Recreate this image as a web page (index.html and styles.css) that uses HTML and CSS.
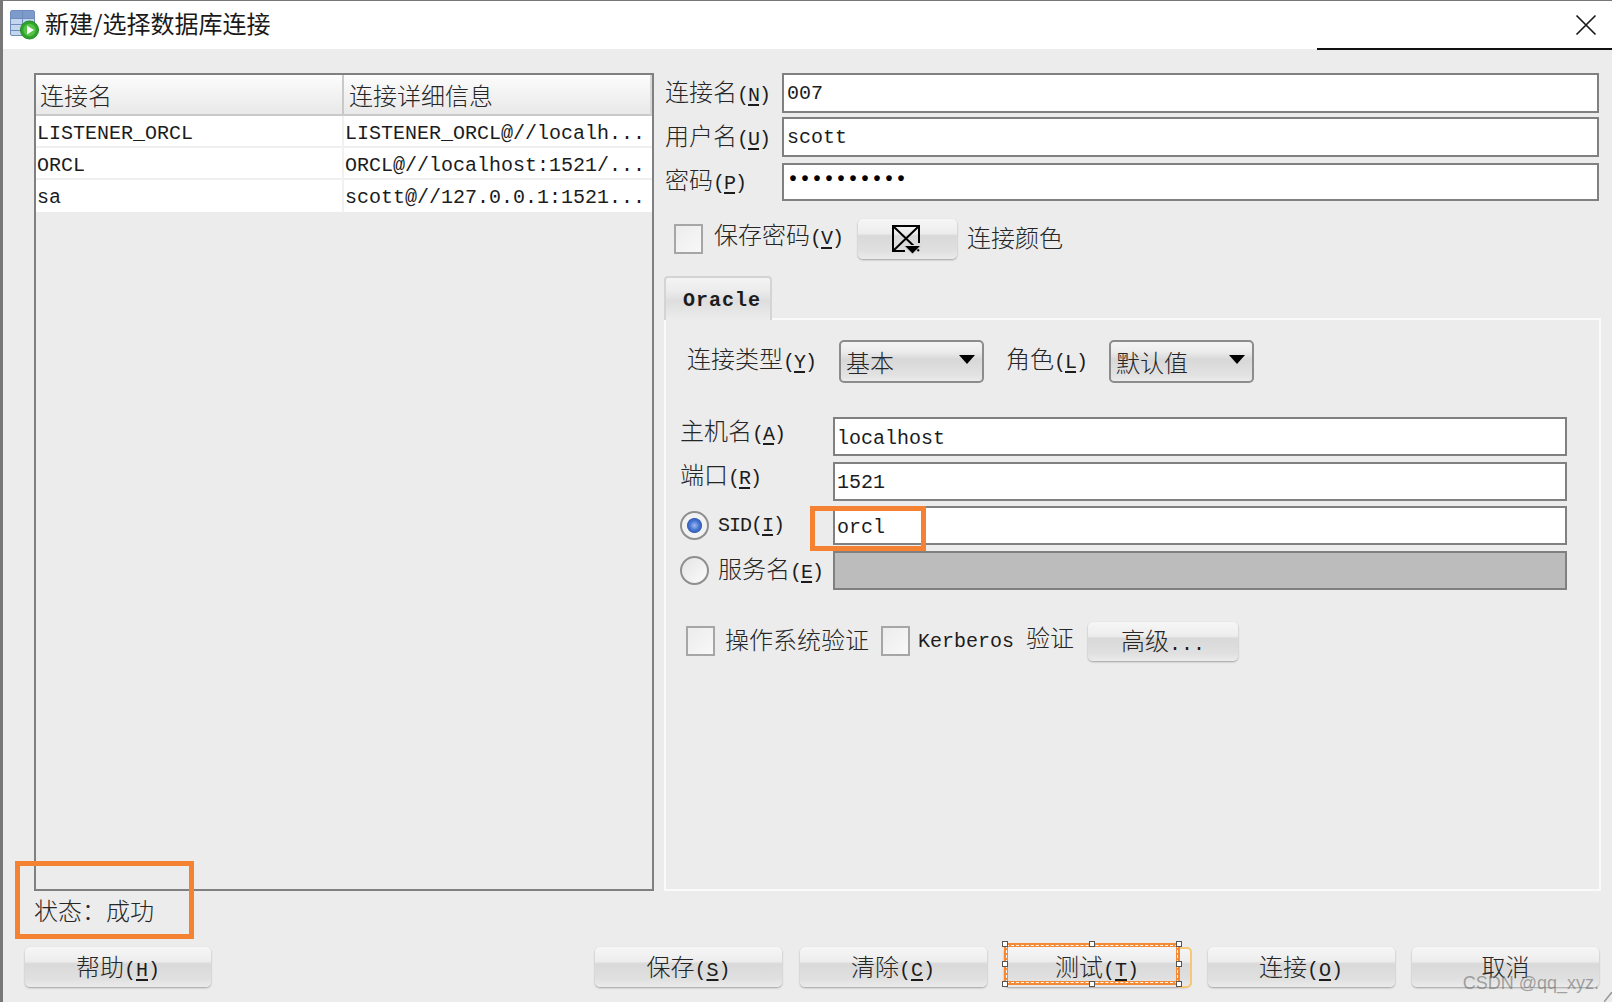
FILE: index.html
```html
<!DOCTYPE html>
<html lang="zh-CN">
<head>
<meta charset="utf-8">
<title>新建/选择数据库连接</title>
<link rel="stylesheet" href="styles.css">
</head>
<body>
<div class="window">
  <header class="titlebar">
    <svg class="app-icon" width="30" height="30" viewBox="0 0 30 30">
      <rect x="0.5" y="0.5" width="24" height="25" rx="1.5" fill="#c4d5ee" stroke="#6f8cbc"/>
      <rect x="1" y="1" width="23" height="7" fill="#7c9bcb"/>
      <path d="M1 8.5H24M1 14.5H24M1 20.5H24M12.5 1V25" stroke="#6f8cbc" fill="none"/>
      <circle cx="19.5" cy="20" r="9" fill="#2fa32a" stroke="#1f8a1f"/>
      <circle cx="19.5" cy="20" r="6.2" fill="#56c24a"/>
      <path d="M17 15.5L24 20L17 24.5Z" fill="#fff"/>
    </svg>
    <h1 class="title">新建/选择数据库连接</h1>
    <svg class="close" width="22" height="22" viewBox="0 0 22 22"><path d="M1.5 1.5L20.5 20.5M20.5 1.5L1.5 20.5" stroke="#1a1a1a" stroke-width="1.7" fill="none"/></svg>
    <div class="title-rule"></div>
  </header>

  <main class="content">
    <div class="main-row">
      <section class="list">
        <div class="list-head">
          <div class="c1">连接名</div>
          <div class="c2">连接详细信息</div>
        </div>
        <div class="list-row"><div class="c1 m">LISTENER_ORCL</div><div class="c2 m">LISTENER_ORCL@//localh...</div></div>
        <div class="list-row"><div class="c1 m">ORCL</div><div class="c2 m">ORCL@//localhost:1521/...</div></div>
        <div class="list-row"><div class="c1 m">sa</div><div class="c2 m">scott@//127.0.0.1:1521...</div></div>
      </section>

      <section class="form">
        <div class="fields">
          <label class="lab">连接名<span class="m">(<u>N</u>)</span></label><div class="input m">007</div>
          <label class="lab">用户名<span class="m">(<u>U</u>)</span></label><div class="input m">scott</div>
          <label class="lab">密码<span class="m">(<u>P</u>)</span></label><div class="input m pw">••••••••••</div>
        </div>
        <div class="options">
          <span class="check"></span>
          <span class="lab">保存密码<span class="m">(<u>V</u>)</span></span>
          <div class="btn colorbtn">
            <svg width="32" height="32" viewBox="0 0 32 32">
              <path d="M15 28H3V3H29V20M3 3L29 28M29 3L3 28" stroke="#000" stroke-width="2" fill="none"/>
              <path d="M14 22.5H31L22.5 31Z" fill="#000" stroke="#ddd" stroke-width="1"/>
            </svg>
          </div>
          <span class="lab colorlab">连接颜色</span>
        </div>
        <div class="tab m">Oracle</div>
        <div class="panel">
          <div class="sel-row">
            <span class="lab w152">连接类型<span class="m">(<u>Y</u>)</span></span>
            <div class="select"><span>基本</span><i class="arrow"></i></div>
            <span class="lab role">角色<span class="m">(<u>L</u>)</span></span>
            <div class="select"><span>默认值</span><i class="arrow"></i></div>
          </div>
          <div class="conn">
            <label class="lab up">主机名<span class="m">(<u>A</u>)</span></label><div class="input m">localhost</div>
            <label class="lab up">端口<span class="m">(<u>R</u>)</span></label><div class="input m">1521</div>
            <label class="radio-lab lab"><span class="radio on"></span><span class="m">SID(<u>I</u>)</span></label><div class="input m">orcl</div>
            <label class="radio-lab lab"><span class="radio"></span><span>服务名<span class="m">(<u>E</u>)</span></span></label><div class="input disabled"></div>
          </div>
          <div class="auth">
            <span class="check"></span>
            <span class="lab">操作系统验证</span>
            <span class="check second"></span>
            <span class="lab kerb"><span class="m">Kerberos </span>验证</span>
            <div class="btn adv">高级<span class="m">...</span></div>
          </div>
        </div>
      </section>
    </div>

    <div class="status">状态：成功</div>

    <footer class="buttons">
      <div class="btn action help">帮助<span class="m">(<u>H</u>)</span></div>
      <div class="btn action">保存<span class="m">(<u>S</u>)</span></div>
      <div class="btn action">清除<span class="m">(<u>C</u>)</span></div>
      <div class="btn action test">测试<span class="m">(<u>T</u>)</span>
        <div class="bracket"></div>
        <div class="selection">
          <i class="h tl"></i><i class="h tm"></i><i class="h tr"></i>
          <i class="h ml"></i><i class="h mr"></i>
          <i class="h bl"></i><i class="h bm"></i><i class="h br"></i>
        </div>
      </div>
      <div class="btn action">连接<span class="m">(<u>O</u>)</span></div>
      <div class="btn action">取消</div>
    </footer>
  </main>

  <div class="mark mark-status"></div>
  <div class="mark mark-sid"></div>
  <div class="watermark">CSDN @qq_xyz.</div>
  <svg class="corner" width="8" height="10" viewBox="0 0 8 10"><path d="M0 10L8 0" stroke="#999" stroke-width="1.5"/></svg>
</div>
</body>
</html>
```
FILE: styles.css
```css
* { box-sizing: border-box; }
html, body { margin: 0; padding: 0; }
body {
  width: 1612px;
  height: 1002px;
  overflow: hidden;
  font-family: "Noto Sans CJK SC", "Liberation Mono", sans-serif;
  font-size: 24px;
  font-weight: 300;
  line-height: 30px;
  color: #262626;
  background: #ececec;
}
u { text-decoration-thickness: 2px; text-underline-offset: 3px; }

.m {
  font-family: "Liberation Mono", "Noto Sans CJK SC", monospace;
  font-size: 20px;
  font-weight: 400;
  white-space: pre;
  color: #1c1c1c;
}
.lab .m { letter-spacing: -1px; }
.kerb .m { letter-spacing: 0 !important; }

.window {
  position: relative;
  width: 1612px;
  height: 1002px;
  display: flex;
  flex-direction: column;
  border-top: 1px solid #777;
  border-left: 3px solid #777;
}

/* Title bar */
.titlebar {
  position: relative;
  height: 48px;
  flex: none;
  display: flex;
  align-items: center;
  background: #fff;
  padding-left: 7px;
}
.app-icon { flex: none; }
.title {
  margin: 0 0 4px 5px;
  font-size: 24px;
  font-weight: 400;
  line-height: 30px;
  color: #1a1a1a;
}
.close { margin-left: auto; margin-right: 15px; }
.title-rule {
  position: absolute;
  left: 1314px;
  right: 0;
  bottom: -1px;
  height: 2px;
  background: #111;
}

/* Content */
.content {
  flex: 1;
  display: flex;
  flex-direction: column;
  padding: 24px 11px 15px 22px;
}
.main-row {
  height: 818px;
  margin-left: 9px;
  display: flex;
  gap: 10px;
}

/* Connection list */
.list {
  width: 620px;
  flex: none;
  border: 2px solid #808080;
}
.list-head {
  height: 41px;
  display: grid;
  grid-template-columns: 306px 1fr;
  align-items: center;
  background: linear-gradient(#fdfdfd, #f3f3f3 45%, #e9e9e9);
  border-bottom: 2px solid #c9c9c9;
  border-right: 2px solid #d8d8d8;
}
.list-head .c1 { padding-left: 4px; }
.list-head .c2 {
  height: 100%;
  padding: 5px 0 0 5px;
  border-left: 2px solid #c9c9c9;
}
.list-row {
  height: 32px;
  display: grid;
  grid-template-columns: 306px 1fr;
  align-items: center;
  background: #fff;
  border-bottom: 2px solid #efefef;
}
.list-row:last-child { border-bottom: 0; }
.list-row .c1 {
  height: 100%;
  line-height: 30px;
  padding: 3px 0 0 1px;
}
.list-row .c2 {
  height: 100%;
  line-height: 30px;
  padding: 3px 0 0 1px;
  border-left: 2px solid #f1f1f1;
}

/* Right form */
.form {
  flex: 1;
  min-width: 0;
  display: flex;
  flex-direction: column;
}
.fields {
  display: grid;
  grid-template-columns: 118px 1fr;
  grid-auto-rows: 40px;
  row-gap: 4px;
  align-items: center;
  padding-right: 2px;
}
.fields .input:nth-of-type(3) { margin-top: 1px; height: 38px; }
.lab { white-space: nowrap; padding-left: 1px; }
.input {
  height: 100%;
  display: flex;
  align-items: center;
  padding: 2px 0 0 3px;
  background: #fff;
  border: 2px solid #808080;
}
.pw { font-weight: 700; padding: 0 0 4px 3px; color: #000; }
.disabled { background: #bcbcbc; }

.options {
  margin-top: 17px;
  height: 41px;
  display: flex;
  align-items: center;
  padding-left: 10px;
}
.options .lab { margin-left: 10px; margin-bottom: 4px; }
.options .colorlab { margin-left: 9px; }
.check {
  flex: none;
  width: 29px;
  height: 30px;
  border: 2px solid #a6a6a6;
  background: linear-gradient(135deg, #ececec, #f8f8f8);
}
.btn {
  display: block;
  text-align: center;
  border-radius: 5px;
  background: linear-gradient(#f6f6f6, #ededed 36%, #d9d9d9 42%, #e0e0e0 80%, #ebebeb);
  box-shadow: 0 1px 2px #9f9f9f;
}
.colorbtn {
  width: 99px;
  height: 40px;
  margin-left: 15px;
  padding-top: 4px;
}
.colorbtn svg { display: block; margin: 0 auto; transform: translateX(-2px); }

.tab {
  position: relative;
  z-index: 1;
  width: 108px;
  height: 44px;
  margin-top: 17px;
  margin-bottom: -2px;
  padding: 8px 0 0 17px;
  font-weight: 700;
  letter-spacing: 1px;
  border: 2px solid #d4d4d4;
  border-bottom: 0;
  border-radius: 4px 4px 0 0;
  background: linear-gradient(#f4f4f4, #ececec 30%, #dedede 55%, #ececec);
}
.panel {
  flex: 1;
  border: 2px solid #fafafa;
  padding: 20px 32px 0 14px;
}
.sel-row {
  height: 43px;
  display: flex;
  align-items: center;
  padding-left: 7px;
}
.sel-row .lab { padding-left: 0; padding-bottom: 2px; }
.w152 { width: 152px; flex: none; }
.role { width: 125px; flex: none; padding-left: 22px !important; }
.select {
  width: 145px;
  height: 43px;
  flex: none;
  display: flex;
  align-items: center;
  justify-content: space-between;
  padding: 0 7px 0 5px;
  border: 2px solid #8c8c8c;
  border-radius: 5px;
  background: linear-gradient(#f4f4f4, #ececec 25%, #d8d8d8 45%, #e2e2e2 85%, #ebebeb);
}
.arrow {
  width: 0;
  height: 0;
  margin-bottom: 4px;
  border-left: 8px solid transparent;
  border-right: 8px solid transparent;
  border-top: 9px solid #000;
}
.conn {
  margin-top: 34px;
  display: grid;
  grid-template-columns: 153px 1fr;
  grid-auto-rows: 39px;
  row-gap: 5.5px;
  align-items: center;
}
.conn .input { padding: 4px 0 0 2px; }
.up { padding-bottom: 9px; padding-left: 0; }
.radio-lab { display: flex; align-items: center; gap: 9px; padding-left: 0; }
.radio {
  width: 29px;
  height: 29px;
  flex: none;
  border: 2px solid #8f8f8f;
  border-radius: 50%;
  background: linear-gradient(135deg, #e4e4e4, #fbfbfb);
}
.radio.on {
  background: radial-gradient(circle 8px at 50% 50%, #9db8ee 0, #3f6fd0 65%, #3a62b8 88%, rgba(255, 255, 255, 0) 100%), #f2f2f2;
}
.auth {
  margin-top: 32px;
  height: 39px;
  display: flex;
  align-items: center;
  padding-left: 6px;
}
.auth .lab { margin-left: 10px; padding-left: 0; padding-bottom: 4px; }
.auth .second { margin-left: 12px; }
.auth .kerb { margin-left: 8px; }
.adv { width: 150px; height: 39px; line-height: 35px; margin-left: 14px; }

/* Status + buttons */
.status {
  height: 56px;
  margin-left: 9px;
  padding-bottom: 18px;
  display: flex;
  align-items: center;
}
.buttons {
  display: flex;
  gap: 17.5px;
  margin-right: 2px;
}
.action { width: 187px; height: 40px; line-height: 38px; flex: none; }
.help { margin-right: auto; width: 186px; }
.test { position: relative; width: 186px; }

/* Annotation overlay on the test button */
.selection {
  position: absolute;
  left: 0;
  right: 10px;
  top: -4px;
  bottom: 2px;
  border: 4px solid #f58a35;
  outline: 1px dashed #fff;
  outline-offset: -3px;
}
.bracket {
  position: absolute;
  right: -2px;
  top: 0;
  width: 14px;
  bottom: -1px;
  border: 2px solid #f7c777;
  border-left: 0;
  border-radius: 0 5px 5px 0;
}
.h {
  position: absolute;
  width: 6px;
  height: 6px;
  background: #fff;
  border: 1px solid #555;
}
.tl, .tm, .tr { top: -6px; }
.bl, .bm, .br { bottom: -6px; }
.ml, .mr { top: calc(50% - 3px); }
.tl, .ml, .bl { left: -6px; }
.tr, .mr, .br { right: -6px; }
.tm, .bm { left: calc(50% - 3px); }

/* Orange annotation boxes and watermark */
.mark {
  position: absolute;
  border: 5px solid #f58233;
}
.mark-status { left: 12px; top: 860px; width: 179px; height: 78px; }
.mark-sid { left: 807px; top: 505px; width: 116px; height: 45px; }
.watermark {
  position: absolute;
  right: 13px;
  bottom: 8px;
  font-family: "Liberation Sans", sans-serif;
  font-size: 18px;
  font-weight: 400;
  line-height: 22px;
  color: rgba(110, 110, 110, 0.6);
}
.corner { position: absolute; right: 0; bottom: 0; }
```
